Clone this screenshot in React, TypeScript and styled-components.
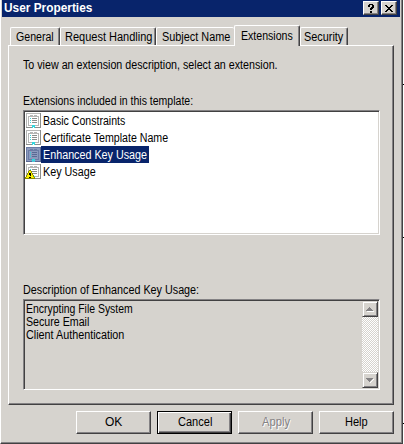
import React, { useLayoutEffect, useRef, useState } from "react";
import styled, { createGlobalStyle, css } from "styled-components";

const face = "#d6d3ce";
const navy = "#08246b";
const grey = "#848284";
const dark = "#424142";

const GlobalStyle = createGlobalStyle`
  body { margin: 0; background: #fff; overflow: hidden; }
  * { box-sizing: border-box; }
`;

const raised = css`
  border: 1px solid;
  border-color: #fff ${dark} ${dark} #fff;
  box-shadow: inset -1px -1px 0 ${grey};
`;

const Desktop = styled.div`
  width: 404px;
  height: 444px;
  display: flex;
  font: 12px/17px "Liberation Sans", Arial, sans-serif;
  color: #000;
`;

const Dialog = styled.main`
  width: 403px;
  height: 444px;
  display: flex;
  flex-direction: column;
  background: ${face};
  border: solid;
  border-width: 0 1px 1px 1px;
  border-color: ${dark} ${dark} ${dark} #fff;
  box-shadow: inset -1px -1px 0 ${grey};
`;

const Edge = styled.div`
  width: 1px;
  display: flex;
  flex-direction: column;
`;

const Tick = styled.i<{ $before: number }>`
  height: 1px;
  margin-top: ${(p) => p.$before}px;
  background: #000;
`;

const TitleBar = styled.header`
  height: 17px;
  margin: 0 2px 0 1px;
  padding: 1px 3px 0 2px;
  display: flex;
  align-items: flex-start;
  background: ${navy};
  color: #fff;
  font-weight: bold;
  line-height: 14px;
`;

const TitleText = styled.div`
  flex: 1;
`;

const CaptionButton = styled.button`
  ${raised}
  width: 16px;
  height: 14px;
  margin-left: 2px;
  padding: 0;
  background: ${face};
  display: grid;
  place-items: center;
  svg { display: block; }
`;

const Tabs = styled.nav`
  height: 21px;
  margin: 8px 0 -1px 9px;
  display: flex;
  align-items: flex-end;
  z-index: 1;
`;

const Tab = styled.button<{ $width: number; $pad?: number; $active?: boolean; $joined?: boolean }>`
  width: ${(p) => p.$width}px;
  height: ${(p) => (p.$active ? 21 : 18)}px;
  margin-bottom: ${(p) => (p.$active ? 0 : 1)}px;
  padding: 0 0 0 ${(p) => p.$pad ?? 5}px;
  background: ${face};
  border: solid #fff;
  border-width: 1px ${(p) => (p.$joined ? 0 : 1)}px 0 1px;
  border-right-color: ${dark};
  border-radius: 2px 2px 0 0;
  box-shadow: ${(p) => (p.$joined ? "none" : `inset -1px 0 0 ${grey}`)};
  font: inherit;
  line-height: ${(p) => (p.$active ? 19 : 16)}px;
  text-align: left;
  color: #000;
  display: block;
`;

const Panel = styled.section`
  width: 386px;
  height: 360px;
  margin-left: 7px;
  padding: 11px 13px 0 14px;
  ${raised}
`;

const Line = styled.p<{ $before?: number }>`
  height: 17px;
  margin: ${(p) => p.$before || 0}px 0 0;
`;

const List = styled.ul`
  ${raised}
  border-color: ${grey} #fff #fff ${grey};
  box-shadow: inset 1px 1px 0 ${dark}, inset -1px -1px 0 ${face};
  width: 357px;
  height: 125px;
  margin: 0;
  padding: 1px 2px;
  background: #fff;
  list-style: none;
`;

const Row = styled.li`
  height: 17px;
  display: flex;
  align-items: center;
`;

const RowLabel = styled.span<{ $selected?: boolean }>`
  height: 17px;
  padding: 0 2px;
  line-height: 19px;
  background: ${(p) => (p.$selected ? navy : "transparent")};
  color: ${(p) => (p.$selected ? "#fff" : "#000")};
`;

const Description = styled.div`
  ${raised}
  border-color: ${grey} #fff #fff ${grey};
  box-shadow: inset 1px 1px 0 ${dark};
  width: 357px;
  height: 91px;
  padding: 1px 1px 1px 2px;
  display: flex;
  justify-content: space-between;
  line-height: 13px;
`;

const DescLines = styled.div`
  padding-top: 2px;
`;

const DescLine = styled.div`
  height: 13px;
`;

const Scrollbar = styled.div`
  width: 16px;
  display: flex;
  flex-direction: column;
  justify-content: space-between;
  background: repeating-conic-gradient(#fff 0 25%, ${face} 0 50%) 0 0 / 2px 2px;
`;

const Arrow = styled.button`
  border: 1px solid;
  border-color: ${face} ${dark} ${dark} ${face};
  box-shadow: inset 1px 1px 0 #fff, inset -1px -1px 0 ${grey};
  width: 16px;
  height: 16px;
  padding: 0;
  background: ${face};
  display: grid;
  place-items: center;
  svg { display: block; }
`;

const Footer = styled.footer`
  display: flex;
  gap: 6px;
  margin: 6px 0 0 75px;
`;

const Button = styled.button<{ $default?: boolean; $disabled?: boolean }>`
  ${raised}
  ${(p) =>
    p.$default &&
    css`
      border-color: #000;
      box-shadow: inset 1px 1px 0 #fff, inset -1px -1px 0 ${dark}, inset -2px -2px 0 ${grey};
    `}
  width: 75px;
  height: 23px;
  padding: 0;
  background: ${face};
  font: inherit;
  line-height: 21px;
  color: ${(p) => (p.$disabled ? grey : "#000")};
  text-shadow: ${(p) => (p.$disabled ? "1px 1px 0 #fff" : "none")};
`;

const FitBox = styled.span`
  display: inline-block;
  vertical-align: top;
  text-align: left;
`;

const FitInner = styled.span`
  display: inline-block;
  vertical-align: top;
  transform-origin: 0 50%;
  white-space: pre;
`;

/* Condenses a label to the width that the system bitmap font gives it. */
function Label({ w, children }: { w: number; children: string }) {
  const ref = useRef<HTMLSpanElement>(null);
  const [scale, setScale] = useState(1);
  useLayoutEffect(() => {
    if (ref.current) setScale(w / ref.current.offsetWidth);
  }, [w]);
  return (
    <FitBox style={{ width: w }}>
      <FitInner ref={ref} style={{ transform: `scaleX(${scale})` }}>
        {children}
      </FitInner>
    </FitBox>
  );
}

const IconSvg = styled.svg`
  display: block;
  overflow: visible;
`;

function ExtensionIcon({ selected, warning }: { selected?: boolean; warning?: boolean }) {
  const paper = selected ? "#8c9abd" : "#fff";
  const frame = selected ? "#5a6994" : "#8c8e8c";
  const rule = selected ? "#6b7ba5" : "#b5b6b5";
  return (
    <IconSvg width="15" height="17" viewBox="0 0 15 17" shapeRendering="crispEdges">
      <path fill={paper} d="M0 1h15v15H0z" />
      <path fill={rule} d="M0 1h14v1H0zM0 2h1v13H0zM2 4h11v1H2zM2 5h1v8H2zM12 5h1v8h-1zM2 13h4v1H2zM9 13h4v1H9zM4 3h3v1H4zM8 3h3v1H8z" />
      <path fill={frame} d="M14 1h1v15h-1zM0 15h6v1H0zM9 15h5v1H9zM6 6h5v1H6zM6 8h5v1H6zM6 10h5v1H6z" />
      <path fill="#31d7de" d="M4 6h1v1H4zM4 8h1v1H4zM4 10h1v1H4zM6 13h3v2H6zM6 15h1v1H6zM8 15h1v1H8z" />
      {warning && (
        <>
          <path fill="#8c8a00" d="M3 7h2v1h1v2h1v2h1v2h1v2H-1v-2h1v-2h1v-2h1V8h1z" />
          <path fill="#f7ef00" d="M3 8h2v2h1v2h1v2h1v1H0v-1h1v-2h1v-2h1z" />
          <path fill="#000" d="M3 10h2v2H3zM3.5 12h1v1h-1zM3 14h2v1H3z" />
        </>
      )}
    </IconSvg>
  );
}

const extensions = [
  { name: "Basic Constraints", w: 82 },
  { name: "Certificate Template Name", w: 125 },
  { name: "Enhanced Key Usage", w: 104, selected: true },
  { name: "Key Usage", w: 53, warning: true },
];

export default function App() {
  return (
    <>
      <GlobalStyle />
      <Desktop>
        <Dialog>
          <TitleBar>
            <TitleText><Label w={88}>User Properties</Label></TitleText>
            <CaptionButton aria-label="Help">
              <svg width="8" height="9" viewBox="0 0 8 9" shapeRendering="crispEdges">
                <path d="M2 0h4v1h1v3H6v1H5v1H3V4h1V3h1V1H3v2H1V1h1zM3 7h2v2H3z" />
              </svg>
            </CaptionButton>
            <CaptionButton aria-label="Close">
              <svg width="8" height="7" viewBox="0 0 8 7" shapeRendering="crispEdges">
                <path d="M0 0h2v1h1v1h2V1h1V0h2v1H7v1H6v1H5v1h1v1h1v1h1v1H6V6H5V5H3v1H2v1H0V6h1V5h1V4h1V3H2V2H1V1H0z" />
              </svg>
            </CaptionButton>
          </TitleBar>
          <Tabs>
            <Tab $width={50}><Label w={38}>General</Label></Tab>
            <Tab $width={96} $pad={4}><Label w={87}>Request Handling</Label></Tab>
            <Tab $width={78} $joined><Label w={68}>Subject Name</Label></Tab>
            <Tab $width={66} $active $pad={6}><Label w={52}>Extensions</Label></Tab>
            <Tab $width={48} $pad={3}><Label w={39}>Security</Label></Tab>
          </Tabs>
          <Panel>
            <Line><Label w={255}>To view an extension description, select an extension.</Label></Line>
            <Line $before={19}><Label w={170}>Extensions included in this template:</Label></Line>
            <List>
              {extensions.map((e) => (
                <Row key={e.name}>
                  <ExtensionIcon selected={e.selected} warning={e.warning} />
                  <RowLabel $selected={e.selected}><Label w={e.w}>{e.name}</Label></RowLabel>
                </Row>
              ))}
            </List>
            <Line $before={47}><Label w={176}>Description of Enhanced Key Usage:</Label></Line>
            <Description>
              <DescLines>
                <DescLine><Label w={107}>Encrypting File System</Label></DescLine>
                <DescLine><Label w={63}>Secure Email</Label></DescLine>
                <DescLine><Label w={98}>Client Authentication</Label></DescLine>
              </DescLines>
              <Scrollbar>
                <Arrow aria-label="Scroll up">
                  <svg width="8" height="5" viewBox="0 0 8 5" shapeRendering="crispEdges">
                    <path fill="#fff" d="M1 4h7v1H1z" />
                    <path fill={grey} d="M3 0h1v1h1v1h1v1h1v1H0V3h1V2h1V1h1z" />
                  </svg>
                </Arrow>
                <Arrow aria-label="Scroll down">
                  <svg width="8" height="5" viewBox="0 0 8 5" shapeRendering="crispEdges">
                    <path fill="#fff" d="M7 1h1v1H7v1H6v1H5v1H4V4h1V3h1V2h1z" />
                    <path fill={grey} d="M0 0h7v1H6v1H5v1H4v1H3V3H2V2H1V1H0z" />
                  </svg>
                </Arrow>
              </Scrollbar>
            </Description>
          </Panel>
          <Footer>
            <Button><Label w={17}>OK</Label></Button>
            <Button $default><Label w={34}>Cancel</Label></Button>
            <Button $disabled><Label w={28}>Apply</Label></Button>
            <Button><Label w={23}>Help</Label></Button>
          </Footer>
        </Dialog>
        <Edge>
          <Tick $before={84} />
          <Tick $before={152} />
          <Tick $before={185} />
        </Edge>
      </Desktop>
    </>
  );
}
